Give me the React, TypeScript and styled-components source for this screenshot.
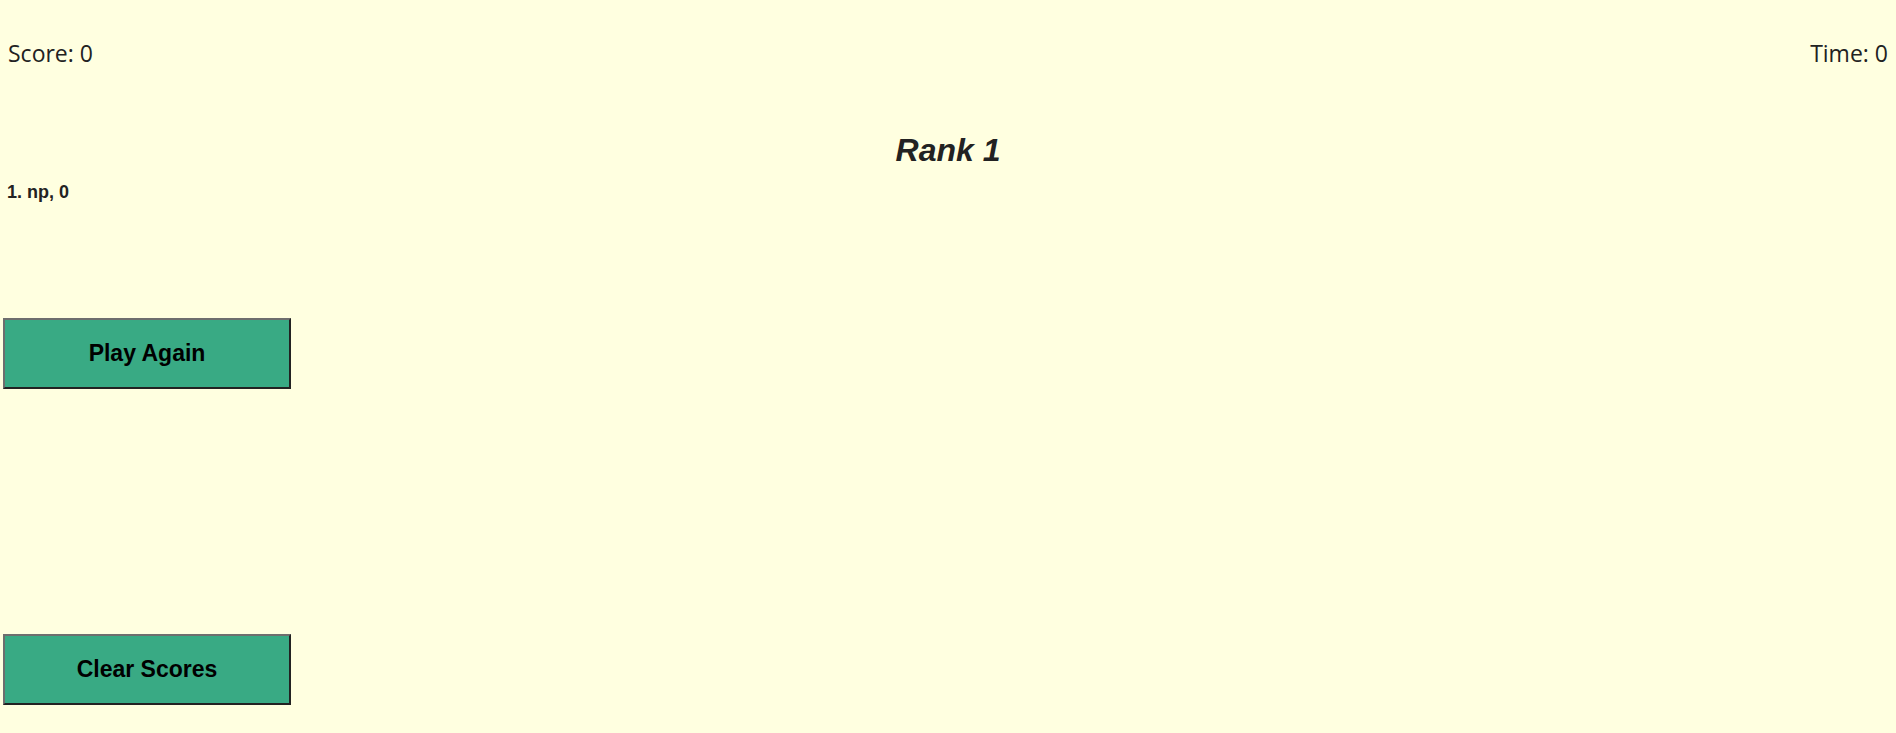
import React, { useState } from "react";
import styled, { createGlobalStyle } from "styled-components";

const GlobalStyle = createGlobalStyle`
  html, body {
    margin: 0;
    padding: 0;
    background: #ffffe0;
  }
  body {
    font-family: "Liberation Sans", Arial, sans-serif;
    color: #222;
  }
`;

const Page = styled.div`
  display: flex;
  flex-direction: column;
  height: 733px;
  overflow: hidden;
`;

const StatusBar = styled.div`
  display: flex;
  justify-content: space-between;
  align-items: center;
  margin-top: 37px;
  padding: 0 8px 0 8px;
  height: 32px;
  font-family: "Open Sans", "Noto Sans", sans-serif;
  font-size: 23px;
  line-height: 32px;
  color: #222;
`;

const Title = styled.h2`
  margin: 63px 0 0;
  text-align: center;
  font-family: "Liberation Sans", Arial, sans-serif;
  font-size: 32px;
  font-style: italic;
  font-weight: bold;
  line-height: 37px;
  color: #222;
`;

const ScoreList = styled.ol`
  list-style: none;
  margin: 13px 0 0;
  padding: 0 0 0 7px;
`;

const ScoreItem = styled.li`
  font-family: "Liberation Sans", Arial, sans-serif;
  font-size: 18px;
  font-weight: bold;
  line-height: 21px;
  color: #222;
`;

const ActionButton = styled.button<{ $gap: number }>`
  display: flex;
  align-items: center;
  justify-content: center;
  flex-shrink: 0;
  margin: ${(p) => p.$gap}px 0 0 3px;
  width: 288px;
  height: 71px;
  background: #39aa84;
  border: 2px solid;
  border-color: #6e6e6e #222 #222 #6e6e6e;
  font-family: "Liberation Sans", Arial, sans-serif;
  font-size: 23px;
  font-weight: bold;
  color: #000;
  cursor: pointer;
`;

interface Entry {
  name: string;
  score: number;
}

const App: React.FC = () => {
  const [scores, setScores] = useState<Entry[]>([{ name: "np", score: 0 }]);
  const [score, setScore] = useState(0);
  const [time, setTime] = useState(0);

  return (
    <Page>
      <GlobalStyle />
      <StatusBar>
        <span>Score: {score}</span>
        <span>Time: {time}</span>
      </StatusBar>
      <Title>Rank 1</Title>
      <ScoreList>
        {scores.map((s, i) => (
          <ScoreItem key={i}>
            {i + 1}. {s.name}, {s.score}
          </ScoreItem>
        ))}
      </ScoreList>
      <ActionButton
        $gap={115}
        onClick={() => {
          setScore(0);
          setTime(0);
        }}
      >
        Play Again
      </ActionButton>
      <ActionButton $gap={245} onClick={() => setScores([])}>
        Clear Scores
      </ActionButton>
    </Page>
  );
};

export default App;
